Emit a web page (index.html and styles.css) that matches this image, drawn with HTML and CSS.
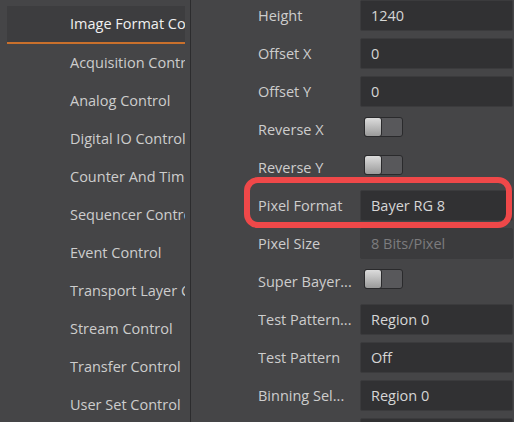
FILE: index.html
```html
<!DOCTYPE html>
<html>
<head>
<meta charset="utf-8">
<link rel="stylesheet" href="styles.css">
</head>
<body>
<div class="app">
  <nav class="nav">
    <div class="nav-item active">Image Format Control</div>
    <div class="nav-item">Acquisition Control</div>
    <div class="nav-item">Analog Control</div>
    <div class="nav-item">Digital IO Control</div>
    <div class="nav-item">Counter And Timer Control</div>
    <div class="nav-item">Sequencer Control</div>
    <div class="nav-item">Event Control</div>
    <div class="nav-item">Transport Layer Control</div>
    <div class="nav-item">Stream Control</div>
    <div class="nav-item">Transfer Control</div>
    <div class="nav-item">User Set Control</div>
  </nav>
  <main class="props">
    <div class="row"><span class="label">Height</span><span class="field">1240</span></div>
    <div class="row"><span class="label">Offset X</span><span class="field">0</span></div>
    <div class="row"><span class="label">Offset Y</span><span class="field">0</span></div>
    <div class="row"><span class="label">Reverse X</span><span class="toggle"><span class="knob"></span></span></div>
    <div class="row"><span class="label">Reverse Y</span><span class="toggle"><span class="knob"></span></span></div>
    <div class="row"><span class="label">Pixel Format</span><span class="field">Bayer RG 8</span></div>
    <div class="row"><span class="label">Pixel Size</span><span class="field disabled">8 Bits/Pixel</span></div>
    <div class="row"><span class="label">Super Bayer...</span><span class="toggle"><span class="knob"></span></span></div>
    <div class="row"><span class="label">Test Pattern...</span><span class="field">Region 0</span></div>
    <div class="row"><span class="label">Test Pattern</span><span class="field">Off</span></div>
    <div class="row"><span class="label">Binning Sel...</span><span class="field">Region 0</span></div>
    <div class="row"><span class="label"></span><span class="field"></span></div>
  </main>
  <div class="highlight"></div>
</div>
</body>
</html>
```

FILE: styles.css
```css
html, body {
  margin: 0;
  padding: 0;
}
body {
  background: #454547;
  font-family: "Open Sans", "Noto Sans", sans-serif;
  font-size: 14.5px;
  overflow: hidden;
}
.app {
  position: relative;
  display: flex;
  width: 514px;
  height: 422px;
  overflow: hidden;
}
.nav {
  width: 191px;
  flex: none;
  box-sizing: border-box;
  border-right: 1px solid #2c2c2e;
  padding-top: 6px;
}
.nav-item {
  height: 38px;
  line-height: 38px;
  margin: 0 5px 0 7px;
  padding-left: 63px;
  white-space: nowrap;
  overflow: hidden;
  color: #cdcdcd;
}
.nav-item.active {
  height: 36px;
  line-height: 36px;
  background: #3d3d3f;
  border-bottom: 2px solid #c9702c;
  color: #f0f0f0;
}
.props {
  flex: 1;
  padding-left: 67px;
  min-width: 0;
}
.row {
  display: flex;
  align-items: center;
  height: 31px;
  margin-bottom: 7px;
}
.label {
  width: 102px;
  flex: none;
  color: #cdcdcd;
  white-space: nowrap;
  overflow: hidden;
}
.field {
  flex: 1;
  height: 31px;
  box-sizing: border-box;
  line-height: 29px;
  background: #313133;
  border: 1px solid #3b3b3d;
  border-radius: 2px;
  padding-left: 10px;
  margin-right: 1px;
  color: #d6d6d6;
  white-space: nowrap;
}
.field.disabled {
  background: #3b3b3d;
  border-color: #3b3b3d;
  color: #7c7c7e;
}
.toggle {
  align-self: flex-start;
  margin-top: 3px;
  margin-left: 4px;
  position: relative;
  width: 39px;
  height: 20px;
  box-sizing: border-box;
  background: #58585b;
  border: 1px solid #2a2a2c;
  border-radius: 3px;
}
.knob {
  position: absolute;
  left: -1px;
  top: -1px;
  width: 18px;
  height: 20px;
  box-sizing: border-box;
  border: 1px solid #2a2a2c;
  border-radius: 3px;
  background: linear-gradient(#dcdcdc, #9a9a9a);
}
.highlight {
  position: absolute;
  left: 244px;
  top: 177px;
  width: 268px;
  height: 51px;
  box-sizing: border-box;
  border: 6px solid #ef4849;
  border-radius: 14px;
}
```
